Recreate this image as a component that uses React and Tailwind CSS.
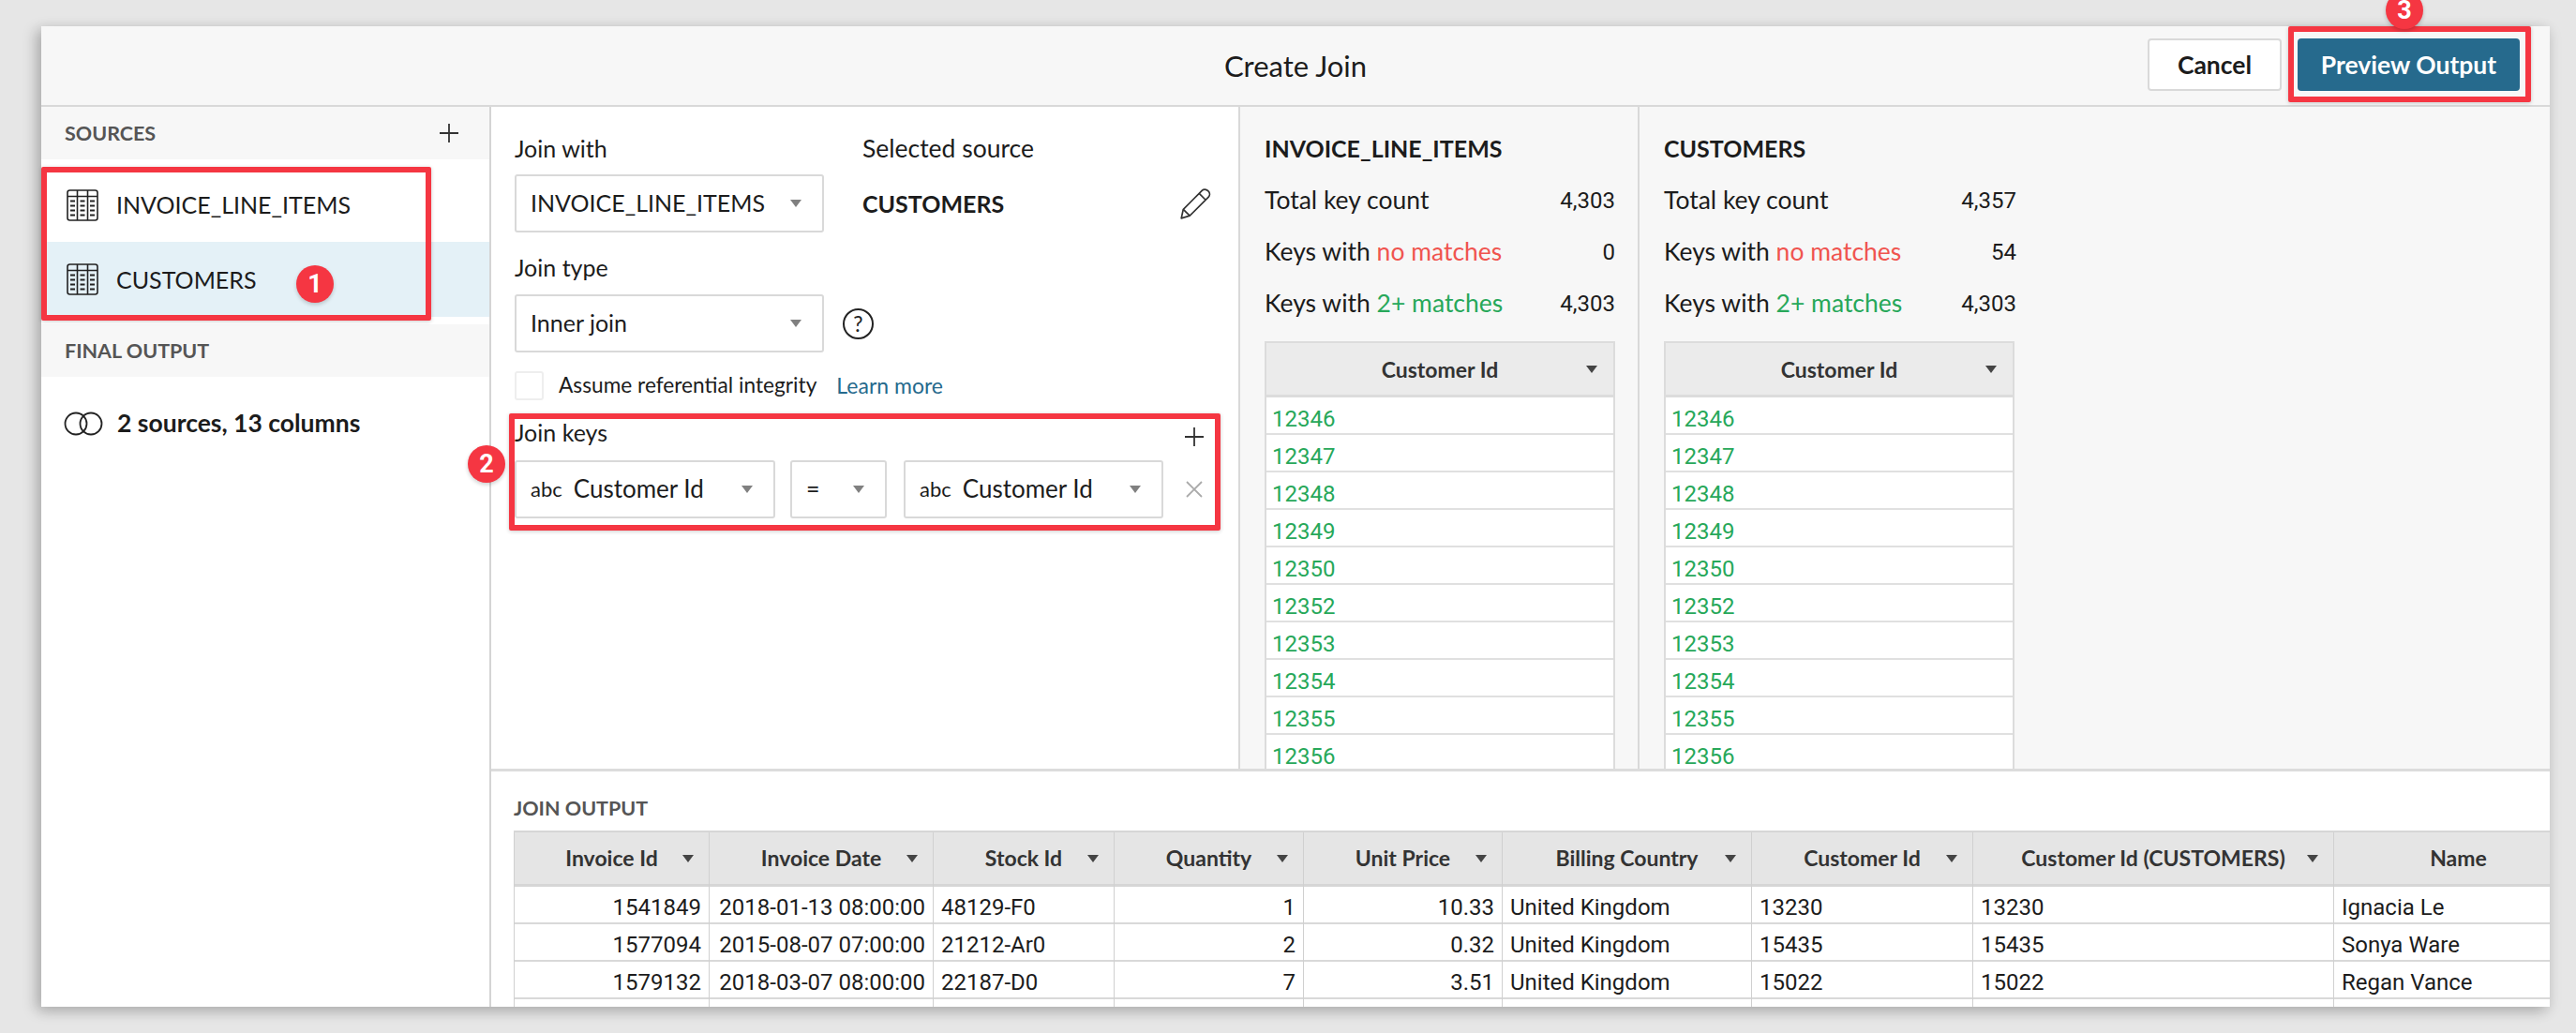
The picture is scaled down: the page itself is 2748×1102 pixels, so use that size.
import React from "react";

const uiFont = "font-['Lato','Noto_Sans',sans-serif]";

const outputColumns = [
  { name: "Invoice Id", width: "w-[209px]", align: "right" },
  { name: "Invoice Date", width: "w-[239px]", align: "right" },
  { name: "Stock Id", width: "w-[193px]", align: "left" },
  { name: "Quantity", width: "w-[202px]", align: "right" },
  { name: "Unit Price", width: "w-[212px]", align: "right" },
  { name: "Billing Country", width: "w-[266px]", align: "left" },
  { name: "Customer Id", width: "w-[236px]", align: "left" },
  { name: "Customer Id (CUSTOMERS)", width: "w-[385px]", align: "left" },
  { name: "Name", width: "w-[266px]", align: "left" },
];

const outputRows = [
  ["1541849", "2018-01-13 08:00:00", "48129-F0", "1", "10.33", "United Kingdom", "13230", "13230", "Ignacia Le"],
  ["1577094", "2015-08-07 07:00:00", "21212-Ar0", "2", "0.32", "United Kingdom", "15435", "15435", "Sonya Ware"],
  ["1579132", "2018-03-07 08:00:00", "22187-D0", "7", "3.51", "United Kingdom", "15022", "15022", "Regan Vance"],
  ["", "", "", "", "", "", "", "", ""],
];

const keyIds = ["12346", "12347", "12348", "12349", "12350", "12352", "12353", "12354", "12355", "12356"];

function Caret({ className = "border-t-[#808080]" }) {
  return (
    <span className={`block w-0 h-0 border-l-[6px] border-r-[6px] border-t-[8px] border-l-transparent border-r-transparent ${className}`} />
  );
}

function TableIcon() {
  return (
    <svg width="34" height="34" viewBox="0 0 34 34" fill="none" stroke="#222" strokeWidth="1.6" className="shrink-0">
      <rect x="1" y="1" width="32" height="32" rx="2.5" />
      <path d="M1 7.5H33M11.5 1V33M22.5 1V33" />
      <path d="M4 12.5H9M4 17.5H9M4 22.5H9M4 27.5H9M14.5 12.5H19.5M14.5 17.5H19.5M14.5 22.5H19.5M14.5 27.5H19.5M25 12.5H30M25 17.5H30M25 22.5H30M25 27.5H30" strokeWidth="2" />
    </svg>
  );
}

function PlusIcon() {
  return (
    <svg width="22" height="22" viewBox="0 0 22 22" stroke="#333" strokeWidth="1.8" className="block">
      <path d="M11 1V21M1 11H21" />
    </svg>
  );
}

function SelectBox({ width, children }) {
  return (
    <div className={`${width} h-[62px] shrink-0 flex items-center justify-between pl-[15px] pr-[22px] bg-white border-2 border-[#d9d9d9] rounded-[3px] text-[25px] text-[#1c1c1c]`}>
      <span className="flex items-center gap-[10px] whitespace-nowrap">{children}</span>
      <Caret />
    </div>
  );
}

function SectionHeader({ children, right }) {
  return (
    <div className="h-[56px] bg-[#f7f7f7] flex items-center justify-between pl-[25px] pr-[32px] text-[21.5px] font-bold text-[#555]">
      <span>{children}</span>
      {right}
    </div>
  );
}

function Stat({ label, value }) {
  return (
    <div className="h-[55px] flex items-center justify-between text-[26.5px] text-[#1c1c1c]">
      <span>{label}</span>
      <span className="font-['Roboto',sans-serif] text-[24px] -mr-[2px]">{value}</span>
    </div>
  );
}

function KeyPanel({ title, total, noMatches, twoPlus, border }) {
  return (
    <div className={`${border} w-[426px] shrink-0 h-full overflow-hidden bg-[#f7f7f7] pl-[26px] pr-[26px] pt-[27px]`}>
      <div className="h-[36px] flex items-center text-[25px] font-bold text-[#1c1c1c] mb-[9px]">{title}</div>
      <Stat label="Total key count" value={total} />
      <Stat label={<>Keys with <span className="text-[#f0544f]">no matches</span></>} value={noMatches} />
      <Stat label={<>Keys with <span className="text-[#27a85a]">2+ matches</span></>} value={twoPlus} />
      <div className="mt-[13px] w-[374px] border-x-2 border-t-2 border-[#dcdcdc] bg-white">
        <div className="h-[58px] bg-[#ebebeb] border-b-[3px] border-[#dcdcdc] flex items-center justify-center relative pt-[2px] text-[23px] font-bold text-[#333]">
          Customer Id
          <span className="absolute right-[17px] top-1/2 -translate-y-1/2"><Caret className="border-t-[#444]" /></span>
        </div>
        {keyIds.map((id) => (
          <div key={id} className="h-[40px] border-b-2 border-[#e0e0e0] flex items-center pl-[6px] pt-[7px] font-['Roboto',sans-serif] text-[24px] text-[#27a85a]">
            {id}
          </div>
        ))}
      </div>
    </div>
  );
}

function Badge({ n, className }) {
  return (
    <div className={`absolute w-[40px] h-[40px] rounded-full bg-[#f53642] text-white font-['Roboto',sans-serif] font-bold text-[27px] flex items-center justify-center shadow-[0_2px_4px_rgba(0,0,0,0.2)] ${className}`}>
      {n}
    </div>
  );
}

export default function App() {
  return (
    <div className={`relative w-[2748px] h-[1102px] overflow-hidden bg-[#e6e6e6] pt-[28px] pl-[44px] ${uiFont}`}>
      <div className="w-[2676px] h-[1046px] bg-white flex flex-col shadow-[-6px_4px_14px_rgba(0,0,0,0.2),0_4px_14px_rgba(0,0,0,0.1)]">
        {/* header */}
        <div className="h-[86px] shrink-0 bg-[#f7f7f7] border-b-2 border-[#d9d9d9] grid grid-cols-[1fr_auto_1fr] items-center">
          <div />
          <div className="text-[31px] text-[#1c1c1c]">Create Join</div>
          <div className="flex justify-end gap-[17px] pr-[32px] pb-[3px]">
            <button className="w-[143px] h-[56px] pt-[2px] bg-white border-2 border-[#d9d9d9] rounded-[4px] text-[26.5px] font-bold text-[#1c1c1c]">Cancel</button>
            <button className="w-[237px] h-[56px] pt-[2px] bg-[#266a8d] rounded-[4px] text-[26.5px] font-bold text-white">Preview Output</button>
          </div>
        </div>

        <div className="flex-1 min-h-0 flex">
          {/* sidebar */}
          <div className="w-[480px] shrink-0 border-r-2 border-[#d4d4d4]">
            <SectionHeader right={<PlusIcon />}>SOURCES</SectionHeader>
            <div className="h-[88px] pt-[10px] pl-[27px] flex items-center gap-[19px] text-[25px] text-[#1c1c1c]">
              <TableIcon />
              INVOICE_LINE_ITEMS
            </div>
            <div className="h-[80px] bg-[#e4f1f7] pl-[27px] flex items-center gap-[19px] text-[25px] text-[#1c1c1c]">
              <TableIcon />
              <span className="pt-[2px]">CUSTOMERS</span>
            </div>
            <div className="h-[8px]" />
            <SectionHeader>FINAL OUTPUT</SectionHeader>
            <div className="h-[100px] pl-[24px] flex items-center gap-[15px] text-[26.5px] font-bold text-[#1c1c1c]">
              <svg width="42" height="26" viewBox="0 0 42 26" fill="none" stroke="#222" strokeWidth="1.8" className="shrink-0">
                <circle cx="13" cy="13" r="11.5" />
                <circle cx="29" cy="13" r="11.5" />
              </svg>
              2 sources, 13 columns
            </div>
          </div>

          <div className="flex-1 min-w-0 flex flex-col">
            <div className="h-[706px] shrink-0 flex">
              {/* join form */}
              <div className="w-[799px] shrink-0 border-r-2 border-[#d9d9d9] pl-[25px] pr-[16px] pt-[27px]">
                <div className="flex">
                  <div className="w-[371px]">
                    <div className="h-[36px] flex items-center text-[25px] text-[#1c1c1c] mb-[9px]">Join with</div>
                    <SelectBox width="w-[330px]">INVOICE_LINE_ITEMS</SelectBox>
                  </div>
                  <div className="flex-1">
                    <div className="h-[36px] flex items-center text-[26.5px] text-[#1c1c1c] mb-[9px]">Selected source</div>
                    <div className="h-[62px] flex items-center justify-between pt-[2px] text-[25px] font-bold text-[#1c1c1c] pr-[12px]">
                      CUSTOMERS
                      <svg width="36" height="36" viewBox="0 0 34 34" fill="none" stroke="#333" strokeWidth="1.6" strokeLinejoin="round">
                        <path d="M3 31L5 22L24 3C25.500 1.500 28 1.500 30 3.500C32 5.500 32 8 30.500 9.500L11.500 28.500L3 31Z" />
                        <path d="M21 6L27.500 12.500M5 22L11.500 28.500" />
                      </svg>
                    </div>
                  </div>
                </div>
                <div className="h-[36px] flex items-center text-[25px] text-[#1c1c1c] mt-[20px] mb-[10px]">Join type</div>
                <div className="flex items-center gap-[20px]">
                  <SelectBox width="w-[330px]">Inner join</SelectBox>
                  <div className="w-[33px] h-[33px] rounded-full border-2 border-[#222] flex items-center justify-center text-[23px] text-[#222]">?</div>
                </div>
                <div className="mt-[18px] flex items-center">
                  <div className="w-[31px] h-[31px] bg-white border-2 border-[#eeeeee] rounded-[3px]" />
                  <span className="ml-[16px] text-[22.700px] text-[#1c1c1c]">Assume referential integrity</span>
                  <span className="ml-[21px] text-[23px] text-[#266a8d]">Learn more</span>
                </div>
                <div className="mt-[15px] h-[36px] flex items-center justify-between text-[25px] text-[#1c1c1c]">
                  Join keys
                  <span className="mr-[20px] mt-[8px]"><PlusIcon /></span>
                </div>
                <div className="mt-[11px] flex items-center">
                  <SelectBox width="w-[278px]"><span className="text-[22px]">abc</span><span className="text-[26px] ml-[2px]">Customer Id</span></SelectBox>
                  <div className="ml-[16px]"><SelectBox width="w-[103px]">=</SelectBox></div>
                  <div className="ml-[18px]"><SelectBox width="w-[277px]"><span className="text-[22px]">abc</span><span className="text-[26px] ml-[2px]">Customer Id</span></SelectBox></div>
                  <svg width="20" height="20" viewBox="0 0 20 20" stroke="#aaa" strokeWidth="1.8" className="ml-[23px]">
                    <path d="M2 2L18 18M18 2L2 18" />
                  </svg>
                </div>
              </div>

              <KeyPanel title="INVOICE_LINE_ITEMS" total="4,303" noMatches="0" twoPlus="4,303" border="border-r-2 border-[#d9d9d9]" />
              <KeyPanel title="CUSTOMERS" total="4,357" noMatches="54" twoPlus="4,303" border="" />
              <div className="flex-1 bg-[#f7f7f7]" />
            </div>

            {/* join output */}
            <div className="flex-1 min-h-0 border-t-[3px] border-[#dcdcdc] overflow-hidden pl-[24px] pt-[26px]">
              <div className="h-[26px] flex items-center text-[21.500px] font-bold text-[#555] mb-[11px]">JOIN OUTPUT</div>
              <div className="flex w-max border-t-2 border-[#d6d6d6]">
                {outputColumns.map((col, i) => (
                  <div key={col.name} className={`${col.width} shrink-0 border-r border-[#d0d0d0] ${i === 0 ? "border-l" : ""}`}>
                    <div className="relative h-[58px] bg-[#e5e5e5] border-b-[3px] border-[#d6d6d6] flex items-center justify-center text-[23px] font-bold text-[#333]">
                      <span className="whitespace-nowrap">{col.name}</span>
                      <span className="absolute right-[16px] top-1/2 -translate-y-1/2"><Caret className="border-t-[#444]" /></span>
                    </div>
                    {outputRows.map((row, r) => (
                      <div
                        key={r}
                        className={`h-[40px] border-b-2 border-[#d9d9d9] flex items-center px-[8px] pt-[6px] font-['Roboto',sans-serif] text-[24px] text-[#1c1c1c] whitespace-nowrap ${col.align === "right" ? "justify-end" : "justify-start"}`}
                      >
                        {row[i]}
                      </div>
                    ))}
                  </div>
                ))}
              </div>
            </div>
          </div>
        </div>
      </div>

      {/* annotations */}
      <div className="absolute left-[44px] top-[178px] w-[416px] h-[164px] border-[6px] border-[#f53642] rounded-[2px] shadow-[0_1px_4px_rgba(0,0,0,0.2)]" />
      <div className="absolute left-[543px] top-[441px] w-[759px] h-[125px] border-[6px] border-[#f53642] rounded-[2px] shadow-[0_1px_4px_rgba(0,0,0,0.2)]" />
      <div className="absolute left-[2441px] top-[28px] w-[259px] h-[81px] border-[6px] border-[#f53642] rounded-[2px] shadow-[0_1px_4px_rgba(0,0,0,0.2)]" />
      <Badge n="1" className="left-[316px] top-[283px]" />
      <Badge n="2" className="left-[499px] top-[475px]" />
      <Badge n="3" className="left-[2545px] top-[-9px]" />
    </div>
  );
}
